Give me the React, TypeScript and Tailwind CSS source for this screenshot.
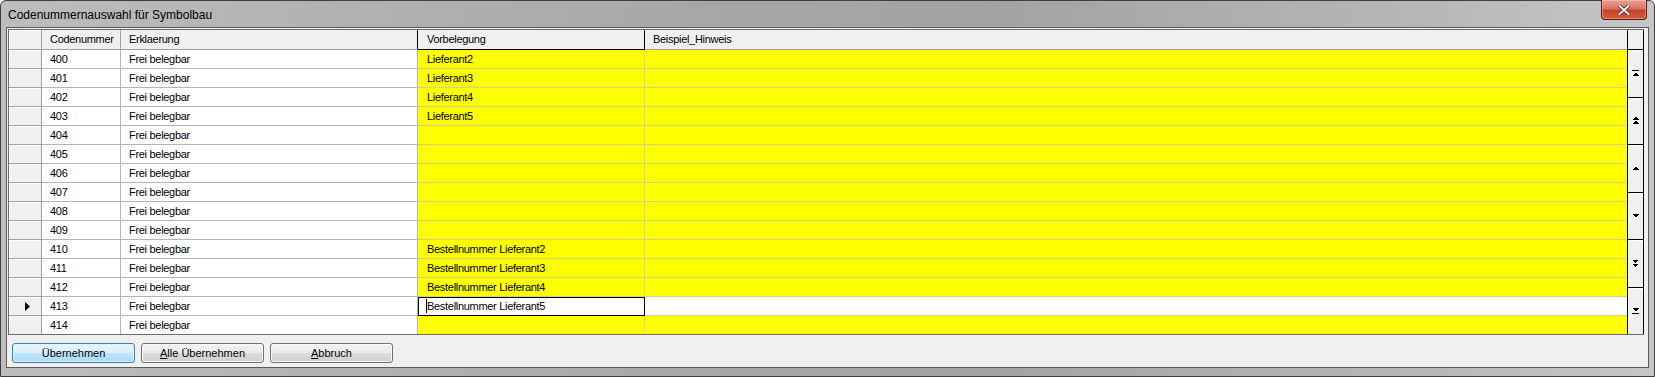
import React from 'react';

const rows: [string, string, string][] = [
  ['400', 'Frei belegbar', 'Lieferant2'],
  ['401', 'Frei belegbar', 'Lieferant3'],
  ['402', 'Frei belegbar', 'Lieferant4'],
  ['403', 'Frei belegbar', 'Lieferant5'],
  ['404', 'Frei belegbar', ''],
  ['405', 'Frei belegbar', ''],
  ['406', 'Frei belegbar', ''],
  ['407', 'Frei belegbar', ''],
  ['408', 'Frei belegbar', ''],
  ['409', 'Frei belegbar', ''],
  ['410', 'Frei belegbar', 'Bestellnummer Lieferant2'],
  ['411', 'Frei belegbar', 'Bestellnummer Lieferant3'],
  ['412', 'Frei belegbar', 'Bestellnummer Lieferant4'],
  ['413', 'Frei belegbar', 'Bestellnummer Lieferant5'],
  ['414', 'Frei belegbar', ''],
];

const CURRENT = 13;

function ScrollIcon({ kind }: { kind: string }) {
  const up = (y: number) => `0,${y + 4} 3.5,${y + 0.5} 7,${y + 4}`;
  const down = (y: number) => `0,${y} 3.5,${y + 3.5} 7,${y}`;
  return (
    <svg width="7" height="9" viewBox="0 0 7 9" shapeRendering="crispEdges">
      {kind === 'top' && (
        <>
          <rect x="0" y="1" width="7" height="1" fill="#000" />
          <polygon points={up(3)} fill="#000" />
        </>
      )}
      {kind === 'pgup' && (
        <>
          <polygon points={up(0)} fill="#000" />
          <polygon points={up(4)} fill="#000" />
        </>
      )}
      {kind === 'up' && <polygon points={up(2)} fill="#000" />}
      {kind === 'down' && <polygon points={down(3)} fill="#000" />}
      {kind === 'pgdn' && (
        <>
          <polygon points={down(0.5)} fill="#000" />
          <polygon points={down(4.5)} fill="#000" />
        </>
      )}
      {kind === 'bottom' && (
        <>
          <polygon points={down(2)} fill="#000" />
          <rect x="0" y="7" width="7" height="1" fill="#000" />
        </>
      )}
    </svg>
  );
}

function WinButton({ children, primary }: { children: React.ReactNode; primary?: boolean }) {
  return (
    <div
      className={
        'w-[123px] h-[20px] rounded-[3px] border flex items-center justify-center text-[11px] text-black ' +
        (primary
          ? 'border-[#3c7fb1] bg-[linear-gradient(to_bottom,#eaf6fd_0%,#d9f0fc_50%,#bee6fd_51%,#a7d9f5_100%)] shadow-[inset_0_0_0_1px_#e0f2fc]'
          : 'border-[#707070] bg-[linear-gradient(to_bottom,#f2f2f2_0%,#ebebeb_50%,#dddddd_51%,#cfcfcf_100%)] shadow-[inset_0_0_0_1px_#fbfbfb]')
      }
    >
      {children}
    </div>
  );
}

export default function App() {
  return (
    <div className="w-[1655px] h-[377px] overflow-hidden bg-white font-['Liberation_Sans',Arial,sans-serif]">
      <div className="w-[1655px] h-[377px] flex flex-col rounded-t-[6px] border border-[#3f3f3f] bg-[linear-gradient(to_right,#bdbdbd_0%,#b2b2b2_20%,#a6a6a6_45%,#a3a3a3_60%,#b6b6b6_85%,#c6c6c6_100%)] px-[5px] pb-[8px]">
        {/* title bar */}
        <div className="h-[26px] flex items-start shrink-0 -mx-[5px] px-[7px]">
          <span className="text-[12px] leading-[26px] pt-[1px] text-black">Codenummernauswahl für Symbolbau</span>
          <div className="ml-auto mr-[0px] -mt-px w-[46px] h-[20px] rounded-b-[4px] border border-t-0 border-[#5c1a10] bg-[linear-gradient(to_bottom,#e8a597_0%,#d8745f_45%,#c7442a_55%,#d05a3f_100%)] shadow-[inset_0_0_0_1px_rgba(255,200,190,0.45)] flex items-center justify-center">
            <svg width="12" height="10" viewBox="0 0 12 10">
              <path d="M1.5 1 L10.5 9 M10.5 1 L1.5 9" stroke="#4a1a12" strokeWidth="3.6" strokeLinecap="square" />
              <path d="M1.5 1 L10.5 9 M10.5 1 L1.5 9" stroke="#ffffff" strokeWidth="2" strokeLinecap="square" />
            </svg>
          </div>
        </div>

        {/* client area */}
        <div className="flex-1 border border-[#5a5a5a] bg-[#f0f0f0] pt-px pl-px flex flex-col">
          {/* grid */}
          <div className="w-[1636px] h-[306px] flex border-l border-t border-b border-[#6d6d6d] bg-white text-[11px] text-black tracking-[-0.3px]">
            <div className="w-[1618px] flex flex-col">
              {/* header */}
              <div className="h-[20px] flex bg-[#f0f0f0] shrink-0">
                <div className="w-[33px] border-r border-b border-[#a0a0a0] shadow-[inset_1px_1px_0_#fff]" />
                <div className="w-[79px] border-r border-b border-[#a0a0a0] pl-[8px] leading-[19px]">Codenummer</div>
                <div className="w-[297px] border-r border-b border-[#a0a0a0] border-r-black pl-[8px] leading-[19px]">Erklaerung</div>
                <div className="w-[227px] border-r border-b border-black pl-[9px] leading-[19px]">Vorbelegung</div>
                <div className="w-[982px] border-b border-[#a0a0a0] pl-[8px] leading-[19px]">Beispiel_Hinweis</div>
              </div>
              {rows.map((r, i) => {
                const last = i === rows.length - 1;
                const cur = i === CURRENT;
                const hb = last ? '' : 'border-b';
                return (
                  <div key={r[0]} className={'flex ' + (last ? 'h-[18px]' : 'h-[19px]')}>
                    <div className={'w-[33px] bg-[#f0f0f0] border-r border-[#a0a0a0] shadow-[inset_1px_1px_0_#fff] flex items-center justify-center ' + hb}>
                      {cur && (
                        <svg width="5" height="9" viewBox="0 0 5 9" className="ml-[4px]">
                          <polygon points="0,0 5,4.5 0,9" fill="#000" />
                        </svg>
                      )}
                    </div>
                    <div className={'w-[79px] border-r border-[#b4b4b4] pl-[8px] leading-[18px] ' + hb}>{r[0]}</div>
                    <div className={'w-[297px] border-r border-[#b4b4b4] pl-[8px] leading-[18px] ' + hb}>{r[1]}</div>
                    {cur ? (
                      <div className="w-[227px] relative bg-white border-r border-b border-black shadow-[inset_1px_1px_0_#000] pl-[9px] leading-[18px]">
                        <span className="absolute left-[8px] top-[2px] w-px h-[14px] bg-black" />
                        {r[2]}
                      </div>
                    ) : (
                      <div className={'w-[227px] bg-[#ffff00] border-r border-[#d2d28c] pl-[9px] leading-[18px] ' + hb}>{r[2]}</div>
                    )}
                    <div className={'w-[982px] border-[#d2d28c] ' + hb + (cur ? ' bg-white border-[#b4b4b4]' : ' bg-[#ffff00]')} />
                  </div>
                );
              })}
            </div>
            {/* vertical scroller */}
            <div className="w-[17px] flex flex-col border-l border-r border-black bg-[#f0f0f0]">
              <div className="h-[20px] shrink-0 border-b border-black" />
              {['top', 'pgup', 'up', 'down', 'pgdn', 'bottom'].map((k, i) => (
                <div
                  key={k}
                  className={'flex-1 flex items-center justify-center shadow-[inset_1px_1px_0_#fff] ' + (i < 5 ? 'border-b border-black' : '')}
                >
                  <ScrollIcon kind={k} />
                </div>
              ))}
            </div>
          </div>

          {/* buttons */}
          <div className="flex gap-[6px] pl-[4px] mt-[8px]">
            <WinButton primary>Übernehmen</WinButton>
            <WinButton>
              <span><span className="underline">A</span>lle Übernehmen</span>
            </WinButton>
            <WinButton>
              <span><span className="underline">A</span>bbruch</span>
            </WinButton>
          </div>
        </div>
      </div>
    </div>
  );
}
